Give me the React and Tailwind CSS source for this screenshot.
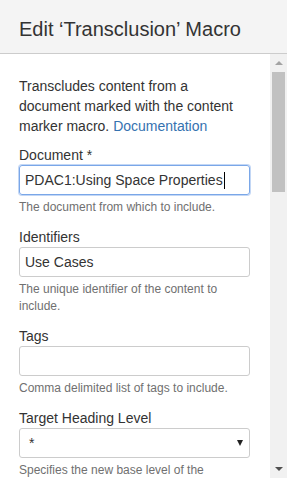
const Field = ({ label, help, children, first }) => {
  return (
    <div className={first ? "mt-[9px]" : "mt-[11px]"}>
      <label className="block text-[14px] leading-[20px] text-[#333]">{label}</label>
      <div>{children}</div>
      <p className="mt-[4px] text-[12px] leading-[17px] text-[#707070]">{help}</p>
    </div>
  );
};

const Scrollbar = () => {
  return (
    <div className="w-[17px] shrink-0 bg-[#f1f1f1] flex flex-col items-center">
      <div className="h-[18px] flex items-center justify-center">
        <div className="w-0 h-0 border-l-[4px] border-r-[4px] border-b-[4px] border-l-transparent border-r-transparent border-b-[#a3a3a3]" />
      </div>
      <div className="w-[13px] h-[120px] bg-[#c1c1c1]" />
      <div className="flex-1" />
      <div className="h-[18px] flex items-center justify-center">
        <div className="w-0 h-0 border-l-[4px] border-r-[4px] border-t-[4px] border-l-transparent border-r-transparent border-t-[#505050]" />
      </div>
    </div>
  );
};

export default function App() {
  return (
    <div
      className="w-[287px] h-[478px] bg-white flex flex-col overflow-hidden"
      style={{ fontFamily: '"Liberation Sans", Arial, sans-serif' }}
    >
      {/* Header */}
      <header className="h-[54px] shrink-0 bg-[#f4f4f4] border-b border-[#cccccc] pl-[19px] pt-[18px]">
        <h1 className="text-[20px] leading-[22px] text-[#333]">Edit ‘Transclusion’ Macro</h1>
      </header>

      {/* Body */}
      <div className="flex flex-1 min-h-0">
        <div className="flex-1 overflow-hidden pl-[19px] pr-[20px] pt-[22px]">
          <p className="text-[14px] leading-[20px] text-[#333]">
            Transcludes content from a document marked with the content marker macro.{" "}
            <a className="text-[#3572b0]">Documentation</a>
          </p>

          <Field label="Document *" help="The document from which to include." first>
            <div className="h-[30px] rounded-[3px] border border-[#7aa7e8] shadow-[0_0_0_1px_rgba(122,167,232,0.45)] px-[5px] flex items-center text-[14px] text-[#333]">
              PDAC1:Using Space Properties
              <span className="inline-block w-px h-[17px] bg-black ml-px" />
            </div>
          </Field>

          <Field label="Identifiers" help="The unique identifier of the content to include.">
            <div className="h-[30px] rounded-[3px] border border-[#cccccc] px-[5px] flex items-center text-[14px] text-[#333]">
              Use Cases
            </div>
          </Field>

          <Field label="Tags" help="Comma delimited list of tags to include.">
            <div className="h-[30px] rounded-[3px] border border-[#cccccc]" />
          </Field>

          <Field label="Target Heading Level" help="Specifies the new base level of the headings in the included content.">
            <div className="h-[30px] rounded-[3px] border border-[#cccccc] pl-[9px] pr-[6px] flex items-center justify-between text-[14px] text-[#333]">
              <span>*</span>
              <div className="w-0 h-0 border-l-[3.5px] border-r-[3.5px] border-t-[6px] border-l-transparent border-r-transparent border-t-[#222]" />
            </div>
          </Field>
        </div>
        <Scrollbar />
      </div>
    </div>
  );
}
